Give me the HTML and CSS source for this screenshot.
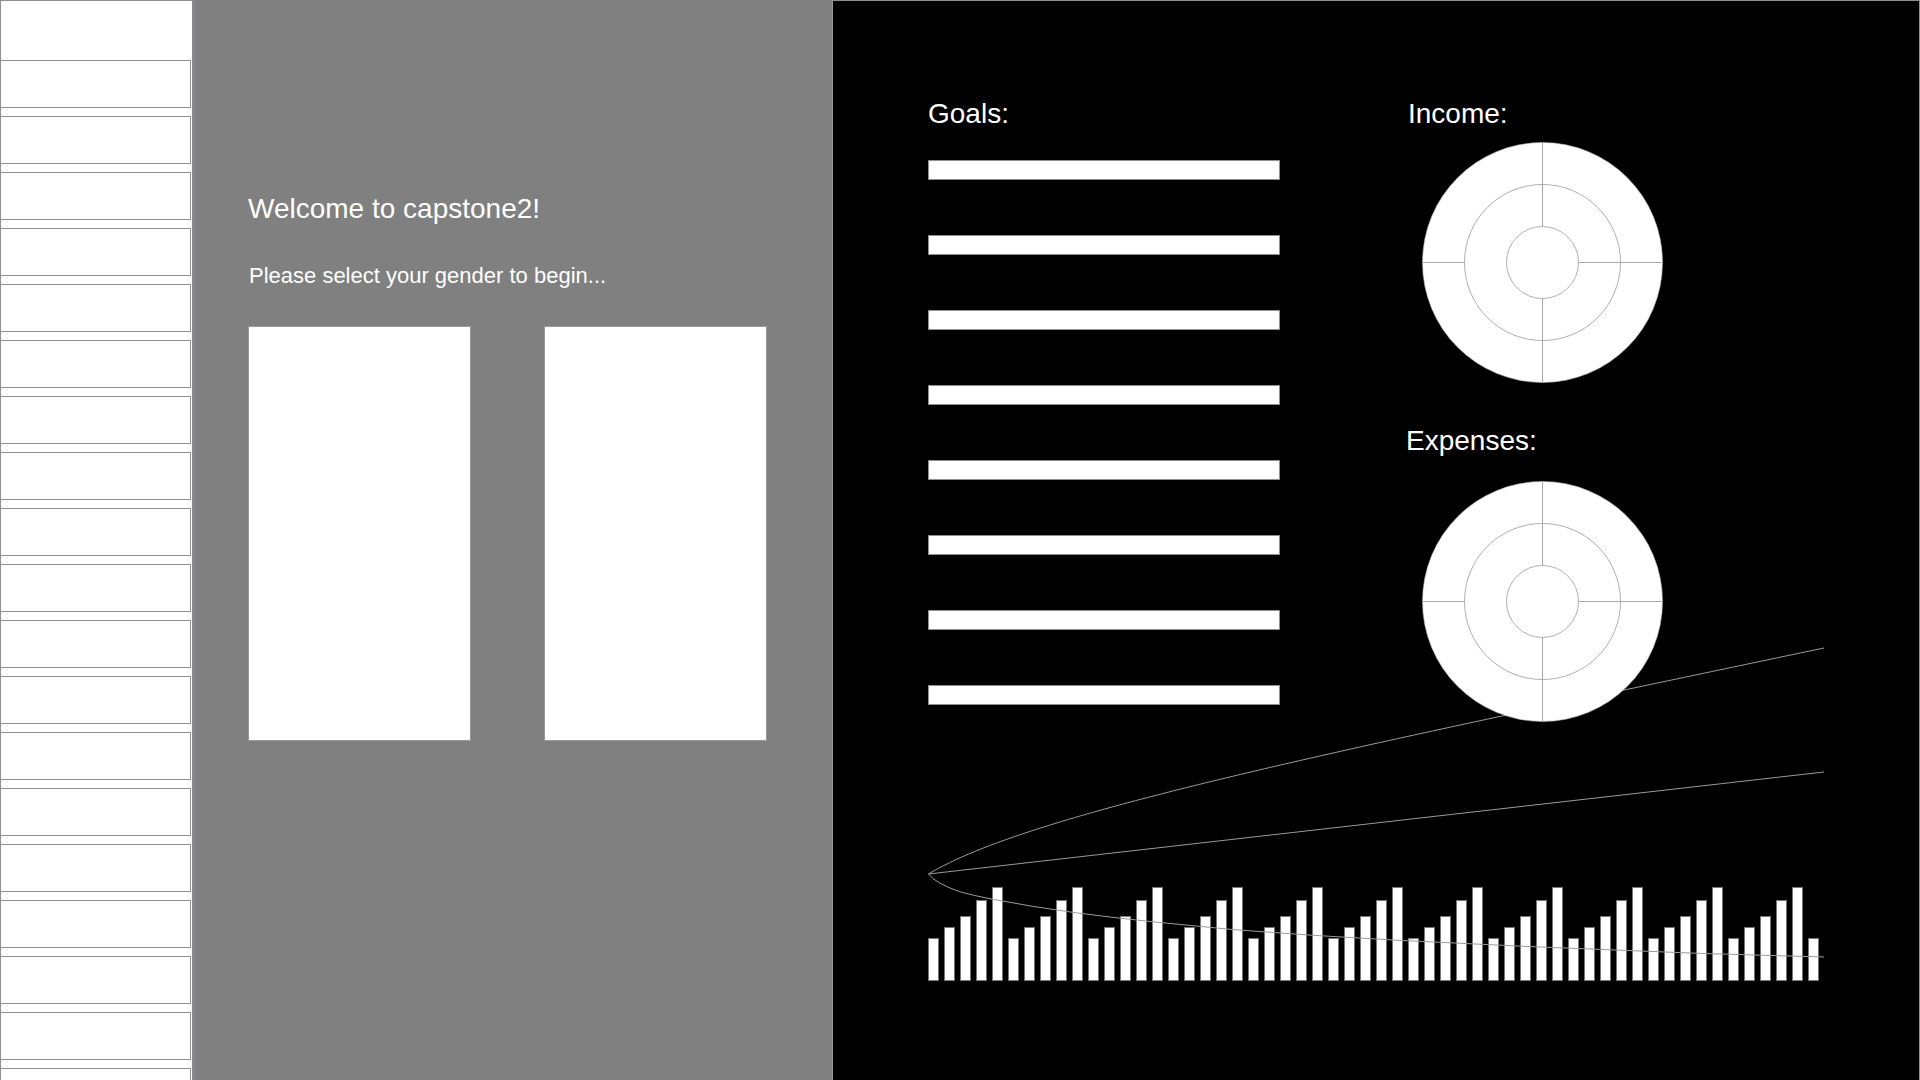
FILE: index.html
```html
<!DOCTYPE html>
<html lang="en">
<head>
    <meta charset="UTF-8">
    <meta name="viewport" content="width=device-width, initial-scale=1.0">
    <title>capstone2</title>
    <link rel="stylesheet" href="styles.css">
</head>
<body>

<div class="sidebar">
    <div class="side-head"></div>
    <div class="side-cell"></div>
    <div class="side-cell"></div>
    <div class="side-cell"></div>
    <div class="side-cell"></div>
    <div class="side-cell"></div>
    <div class="side-cell"></div>
    <div class="side-cell"></div>
    <div class="side-cell"></div>
    <div class="side-cell"></div>
    <div class="side-cell"></div>
    <div class="side-cell"></div>
    <div class="side-cell"></div>
    <div class="side-cell"></div>
    <div class="side-cell"></div>
    <div class="side-cell"></div>
    <div class="side-cell"></div>
    <div class="side-cell"></div>
    <div class="side-cell"></div>
    <div class="side-cell"></div>
</div>

<div class="welcome">
    <h1 class="welcome-title">Welcome to capstone2!</h1>
    <p class="welcome-sub">Please select your gender to begin...</p>
    <div class="gender-row">
        <div class="gender-card"></div>
        <div class="gender-card"></div>
    </div>
</div>

<div class="dashboard">
    <div class="dash-top">
        <div class="goals">
            <h2 class="label">Goals:</h2>
            <div class="goal-list">
                <div class="goal-bar"></div>
                <div class="goal-bar"></div>
                <div class="goal-bar"></div>
                <div class="goal-bar"></div>
                <div class="goal-bar"></div>
                <div class="goal-bar"></div>
                <div class="goal-bar"></div>
                <div class="goal-bar"></div>
            </div>
        </div>
        <div class="money">
            <h2 class="label">Income:</h2>
            <svg class="pie pie-income" width="241" height="241" viewBox="0 0 241 241">
                <circle cx="120.5" cy="120.5" r="120" fill="#fff" stroke="#b0b0b0" stroke-width="0.6"/>
                <circle cx="120.5" cy="120.5" r="78" fill="none" stroke="#9a9a9a" stroke-width="0.8"/>
                <circle cx="120.5" cy="120.5" r="36" fill="none" stroke="#9a9a9a" stroke-width="0.8"/>
                <g stroke="#a8a8a8" stroke-width="1">
                    <line x1="120.5" y1="0.5" x2="120.5" y2="84.5"/>
                    <line x1="120.5" y1="156.5" x2="120.5" y2="240.5"/>
                    <line x1="0.5" y1="120.5" x2="42.5" y2="120.5"/>
                    <line x1="156.5" y1="120.5" x2="240.5" y2="120.5"/>
                </g>
            </svg>
            <h2 class="label label-exp">Expenses:</h2>
            <svg class="pie pie-expenses" width="241" height="241" viewBox="0 0 241 241">
                <circle cx="120.5" cy="120.5" r="120" fill="#fff" stroke="#b0b0b0" stroke-width="0.6"/>
                <circle cx="120.5" cy="120.5" r="78" fill="none" stroke="#9a9a9a" stroke-width="0.8"/>
                <circle cx="120.5" cy="120.5" r="36" fill="none" stroke="#9a9a9a" stroke-width="0.8"/>
                <g stroke="#a8a8a8" stroke-width="1">
                    <line x1="120.5" y1="0.5" x2="120.5" y2="84.5"/>
                    <line x1="120.5" y1="156.5" x2="120.5" y2="240.5"/>
                    <line x1="0.5" y1="120.5" x2="42.5" y2="120.5"/>
                    <line x1="156.5" y1="120.5" x2="240.5" y2="120.5"/>
                </g>
            </svg>
        </div>
    </div>

    <div class="chart">
        <div class="bar b1"></div><div class="bar b2"></div><div class="bar b3"></div><div class="bar b4"></div><div class="bar b5"></div>
        <div class="bar b1"></div><div class="bar b2"></div><div class="bar b3"></div><div class="bar b4"></div><div class="bar b5"></div>
        <div class="bar b1"></div><div class="bar b2"></div><div class="bar b3"></div><div class="bar b4"></div><div class="bar b5"></div>
        <div class="bar b1"></div><div class="bar b2"></div><div class="bar b3"></div><div class="bar b4"></div><div class="bar b5"></div>
        <div class="bar b1"></div><div class="bar b2"></div><div class="bar b3"></div><div class="bar b4"></div><div class="bar b5"></div>
        <div class="bar b1"></div><div class="bar b2"></div><div class="bar b3"></div><div class="bar b4"></div><div class="bar b5"></div>
        <div class="bar b1"></div><div class="bar b2"></div><div class="bar b3"></div><div class="bar b4"></div><div class="bar b5"></div>
        <div class="bar b1"></div><div class="bar b2"></div><div class="bar b3"></div><div class="bar b4"></div><div class="bar b5"></div>
        <div class="bar b1"></div><div class="bar b2"></div><div class="bar b3"></div><div class="bar b4"></div><div class="bar b5"></div>
        <div class="bar b1"></div><div class="bar b2"></div><div class="bar b3"></div><div class="bar b4"></div><div class="bar b5"></div>
        <div class="bar b1"></div><div class="bar b2"></div><div class="bar b3"></div><div class="bar b4"></div><div class="bar b5"></div>
        <div class="bar b1"></div>

        <!-- trend lines drawn over the bars -->
        <svg class="trend" width="900" height="330" viewBox="0 0 900 330">
            <g fill="none" stroke="#9a9a9a" stroke-width="1">
                <path d="M0.5,234 C100,174 396,113 896,8"/>
                <path d="M0.5,234 L896,132"/>
                <polyline points="0.5,234 5,238.6 12,243.2 22,248 32,251.8 48,255.8 65,259.3 105,266.4 145,272.4 185,277.4 225,281.8 305,289.6 385,295.3 472,300.4 600,306.5 772,313.4 896,317"/>
            </g>
        </svg>
    </div>
</div>

</body>
</html>
```

FILE: styles.css
```css
body {
    margin: 0;
    height: 1080px;
    overflow: hidden;
    display: flex;
    font-family: "Liberation Sans", Arial, sans-serif;
    color: white;
    background-color: white;
}

/* left list */
.sidebar {
    width: 191px;
    flex-shrink: 0;
    background-color: white;
    border-left: 1px solid #8e8e8e;
    border-right: 3px solid #8a8a8e;
    display: flex;
    flex-direction: column;
}
.side-head {
    height: 59px;
    flex-shrink: 0;
    border-top: 1px solid #8e8e8e;
}
.side-cell {
    height: 46px;
    flex-shrink: 0;
    margin-bottom: 8px;
    margin-right: 1px;
    border-top: 1px solid #8e8e8e;
    border-bottom: 1px solid #8e8e8e;
    border-right: 1px solid #8e8e8e;
}

/* gray welcome panel */
.welcome {
    width: 584px;
    flex-shrink: 0;
    background-color: #808080;
    padding: 195px 0 0 53px;
}
.welcome-title {
    margin: 0;
    font-size: 28px;
    font-weight: normal;
    line-height: 28px;
}
.welcome-sub {
    margin: 42px 0 0 1px;
    font-size: 22px;
    line-height: 22px;
}
.gender-row {
    display: flex;
    gap: 73px;
    margin-top: 39px;
}
.gender-card {
    width: 221px;
    height: 413px;
    background-color: white;
    border: 1px solid #9a9a9a;
}

/* black dashboard */
.dashboard {
    flex: 1;
    background-color: black;
    border-left: 1px solid #9a9a9a;
    border-top: 1px solid #8e8e8e;
    border-right: 1px solid #8e8e8e;
    padding: 99px 0 0 95px;
}
.dash-top {
    display: grid;
    grid-template-columns: 352px auto;
    column-gap: 128px;
    align-items: start;
}
.label {
    margin: 0;
    font-size: 28px;
    font-weight: normal;
    line-height: 28px;
}
.label-exp {
    margin: 44px 0 0 -2px;
}
.goal-list {
    display: flex;
    flex-direction: column;
    gap: 55px;
    margin-top: 32px;
}
.goal-bar {
    height: 18px;
    background-color: white;
    border: 1px solid #8e8e8e;
}
.money {
    display: flex;
    flex-direction: column;
}
.pie {
    display: block;
    margin-left: 14px;
    position: relative;
    z-index: 1;
}
.pie-income {
    margin-top: 14px;
}
.pie-expenses {
    margin-top: 26px;
}

.chart {
    position: relative;
    display: flex;
    align-items: flex-end;
    gap: 5px;
    height: 94px;
    margin-top: 165px;
}
.bar {
    width: 9px;
    background-color: white;
    border: 1px solid #777;
}
.b1 { height: 41px; }
.b2 { height: 52px; }
.b3 { height: 63px; }
.b4 { height: 79px; }
.b5 { height: 92px; }
.trend {
    position: absolute;
    left: 0;
    top: -247px;
}
```
